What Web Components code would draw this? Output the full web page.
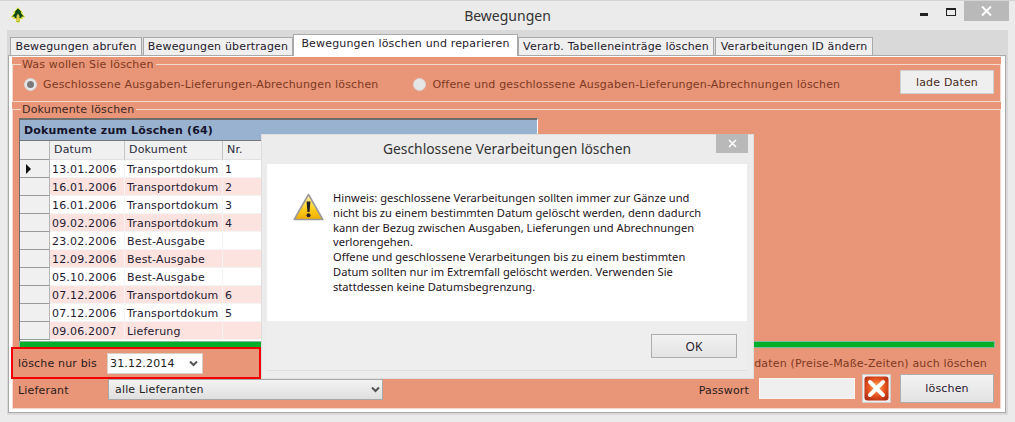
<!DOCTYPE html>
<html lang="de">
<head>
<meta charset="utf-8">
<title>Bewegungen</title>
<style>
html, body { margin: 0; padding: 0; background: #ebebeb; }
body { font: 11px "DejaVu Sans", sans-serif; letter-spacing: .17px; color: #221c2c; overflow: hidden; }
</style>
</head>
<body>
<app-window heading="Bewegungen">
    <tab-strip>
        <tab-item style="width:132px">Bewegungen abrufen</tab-item>
        <tab-item style="width:150px">Bewegungen übertragen</tab-item>
        <tab-item active style="width:225px">Bewegungen löschen und reparieren</tab-item>
        <tab-item style="width:196px">Verarb. Tabelleneinträge löschen</tab-item>
        <tab-item style="width:158px">Verarbeitungen ID ändern</tab-item>
    </tab-strip>
    <tab-panel>
        <group-box legend="Was wollen Sie löschen" tone="#7d3a22" style="height:38px">
            <options-row>
                <radio-option checked>Geschlossene Ausgaben-Lieferungen-Abrechungen löschen</radio-option>
                <radio-option>Offene und geschlossene Ausgaben-Lieferungen-Abrechnungen löschen</radio-option>
                <win-button slot="end" style="width:94px;height:24px" pale>lade Daten</win-button>
            </options-row>
        </group-box>
        <group-box legend="Dokumente löschen" tone="#3b2a26" style="height:300px;margin-top:7px">
            <doc-grid></doc-grid>
            <div style="width:976px;height:7px;margin-left:1px;background:#05ae28;box-shadow:inset 0 0 0 1px #7fb89a"></div>
            <form-row style="margin-top:5px;height:21px">
                <span style="width:89px">lösche nur bis</span>
                <select-box value="31.12.2014" plain style="width:96px;height:21px"></select-box>
                <span style="margin-left:auto;margin-right:13px;color:#7d3a22">daten (Preise-Maße-Zeiten) auch löschen</span>
            </form-row>
            <form-row style="height:29px">
                <span style="width:90px;padding-top:3px">Lieferant</span>
                <select-box value="alle Lieferanten" style="width:275px;height:21px;margin-top:1px"></select-box>
                <span style="margin-left:auto;margin-right:10px;padding-top:3px">Passwort</span>
                <input-box></input-box>
                <win-button style="width:29px;height:29px;margin-left:7px" pale><cancel-icon></cancel-icon></win-button>
                <win-button style="width:94px;height:29px;margin-left:9px;margin-right:6px">löschen</win-button>
            </form-row>
        </group-box>
    </tab-panel>
    <message-dialog slot="over" heading="Geschlossene Verarbeitungen löschen">
        Hinweis: geschlossene Verarbeitungen sollten immer zur Gänze und<br>
        nicht bis zu einem bestimmten Datum gelöscht werden, denn dadurch<br>
        kann der Bezug zwischen Ausgaben, Lieferungen und Abrechnungen<br>
        verlorengehen.<br>
        Offene und geschlossene Verarbeitungen bis zu einem bestimmten<br>
        Datum sollten nur im Extremfall gelöscht werden. Verwenden Sie<br>
        stattdessen keine Datumsbegrenzung.
    </message-dialog>
    <red-mark slot="over"></red-mark>
</app-window>

<script>
class AppWindow extends HTMLElement {
    constructor() {
        super();
        this.attachShadow({ mode: 'open' });
    }
    connectedCallback() {
        this.shadowRoot.innerHTML = `
            <style>
                :host { display: block; position: relative; width: 1015px; height: 422px; box-sizing: border-box; background: #ebebeb; border-top: 1px solid #d4d4d4; overflow: hidden; }
                .bar { height: 29px; display: grid; grid-template-columns: 1fr auto 1fr; align-items: start; }
                .logo { margin: 6px 0 0 10px; }
                h1 { margin: 4px 0 0; font: 14px/22px "Noto Sans", sans-serif; letter-spacing: 0; color: #333; }
                .controls { justify-self: end; display: flex; margin-right: 6px; align-items: flex-start; }
                .min { width: 8px; height: 3px; background: #222; margin: 12px 18px 0 0; }
                .max { width: 8px; height: 5px; border: 1px solid #222; border-top-width: 2px; margin: 7px 8px 0 0; }
                .close { width: 45px; height: 20px; background: #b9b9b9; display: flex; align-items: center; justify-content: center; }
                .body { margin: 0 7px; height: 385px; box-sizing: border-box; background: #d9d9d9; padding-top: 5px; }
            </style>
            <div class="bar">
                <svg class="logo" width="16" height="16" viewBox="0 0 16 16">
                    <path d="M8 .8 12.300 5.500H11l3.500 4.500h-3l1 1.500H9.700L9.500 15h-3L6.300 11.500H3.500l1-1.500h-3L5 5.500H3.700z" fill="#0c4a17" stroke="#e7e32a" stroke-width=".9"/>
                    <path d="M6.500 9 8 6.500 9.500 9v5.500h-3z" fill="#dccb55"/>
                </svg>
                <h1>${this.getAttribute('heading')}</h1>
                <div class="controls">
                    <div class="min"></div>
                    <div class="max"></div>
                    <div class="close">
                        <svg width="11" height="10" viewBox="0 0 11 10"><path d="M1 .5 10 9.500M10 .5 1 9.500" stroke="#fff" stroke-width="2"/></svg>
                    </div>
                </div>
            </div>
            <div class="body"><slot></slot></div>
            <slot name="over"></slot>
        `;
    }
}

class TabStrip extends HTMLElement {
    constructor() {
        super();
        this.attachShadow({ mode: 'open' }).innerHTML = `
            <style>
                :host { display: flex; align-items: flex-end; height: 20px; padding-left: 3px; position: relative; z-index: 1; }
            </style>
            <slot></slot>
        `;
    }
}

class TabItem extends HTMLElement {
    constructor() {
        super();
        this.attachShadow({ mode: 'open' }).innerHTML = `
            <style>
                :host { display: block; flex: none; box-sizing: border-box; height: 18px; margin-right: 1px; text-align: center; line-height: 17px; background: #efefef; border: 1px solid #a9a9a9; border-bottom: 0; white-space: nowrap; color: #1f1a2c; }
                :host([active]) { height: 22px; margin: 0 0 -1px -1px; line-height: 18px; background: #fff; }
            </style>
            <slot></slot>
        `;
    }
}

class TabPanel extends HTMLElement {
    constructor() {
        super();
        this.attachShadow({ mode: 'open' }).innerHTML = `
            <style>
                :host { display: block; box-sizing: border-box; width: 998px; height: 358px; margin-left: 1px; border: 1px solid #a9a9a9; background: #fff; padding: 1px 4px 3px 3px; }
                .fill { background: #e99578; height: 352px; padding-top: 7px; box-sizing: border-box; }
            </style>
            <div class="fill"><slot></slot></div>
        `;
    }
}

class GroupBox extends HTMLElement {
    constructor() {
        super();
        this.attachShadow({ mode: 'open' });
    }
    connectedCallback() {
        const tone = this.getAttribute('tone');
        this.shadowRoot.innerHTML = `
            <style>
                :host { display: flex; flex-direction: column; position: relative; box-sizing: border-box; width: 989px; border: 1px solid #f2d9cf; padding: 0 0 0 5px; }
                .legend { position: absolute; left: 8px; top: -7px; padding: 0 2px 0 1px; line-height: 13px; background: #e99578; color: ${tone}; }
            </style>
            <span class="legend">${this.getAttribute('legend')}</span>
            <slot></slot>
        `;
    }
}

class OptionsRow extends HTMLElement {
    constructor() {
        super();
        this.attachShadow({ mode: 'open' }).innerHTML = `
            <style>
                :host { display: flex; align-items: center; height: 36px; padding-left: 6px; }
                .opts { display: flex; gap: 35px; flex: 1; align-items: center; padding-top: 3px; }
                .end { margin-right: 6px; margin-top: -2px; display: block; }
            </style>
            <div class="opts"><slot></slot></div>
            <slot class="end" name="end"></slot>
        `;
    }
}

class RadioOption extends HTMLElement {
    constructor() {
        super();
        this.attachShadow({ mode: 'open' }).innerHTML = `
            <style>
                :host { display: flex; align-items: center; gap: 6px; color: #7d3a22; white-space: nowrap; }
                .dot { width: 13px; height: 13px; box-sizing: border-box; border-radius: 50%; background: #e6e6e6; border: 1px solid #d8d8d8; display: flex; align-items: center; justify-content: center; }
                :host([checked]) .dot::after { content: ""; width: 7px; height: 7px; border-radius: 50%; background: #7b7b7b; }
            </style>
            <span class="dot"></span><slot></slot>
        `;
    }
}

class WinButton extends HTMLElement {
    constructor() {
        super();
        this.attachShadow({ mode: 'open' }).innerHTML = `
            <style>
                :host { display: flex; align-items: center; justify-content: center; box-sizing: border-box; background: linear-gradient(#f2f2f2, #e3e3e3); border: 1px solid #adadad; color: #26182c; flex: none; }
                :host([pale]) { background: #efefef; border-color: #cfcfcf; color: #4a2a20; }
            </style>
            <slot></slot>
        `;
    }
}

class CancelIcon extends HTMLElement {
    constructor() {
        super();
        this.attachShadow({ mode: 'open' }).innerHTML = `
            <style>:host { display: block; width: 25px; height: 25px; }</style>
            <svg width="25" height="25" viewBox="0 0 25 25">
                <defs>
                    <radialGradient id="g" cx="50%" cy="45%" r="62%">
                        <stop offset="0" stop-color="#ffb25a"/>
                        <stop offset=".55" stop-color="#e8551f"/>
                        <stop offset="1" stop-color="#b32c12"/>
                    </radialGradient>
                </defs>
                <rect x=".5" y=".5" width="24" height="24" rx="3" fill="url(#g)"/>
                <path d="M6 6 19 19M19 6 6 19" stroke="#fff" stroke-width="4" stroke-linecap="round"/>
            </svg>
        `;
    }
}

class FormRow extends HTMLElement {
    constructor() {
        super();
        this.attachShadow({ mode: 'open' }).innerHTML = `
            <style>
                :host { display: flex; align-items: center; color: #2a1c1c; white-space: nowrap; }
            </style>
            <slot></slot>
        `;
    }
}

class SelectBox extends HTMLElement {
    constructor() {
        super();
        this.attachShadow({ mode: 'open' });
    }
    connectedCallback() {
        this.shadowRoot.innerHTML = `
            <style>
                :host { display: flex; align-items: center; justify-content: space-between; box-sizing: border-box; flex: none; padding: 0 2px 0 6px; background: linear-gradient(#f3f3f3, #dfdfdf); border: 1px solid #a8a8a8; color: #222; }
                :host([plain]) { background: #fff; border-color: #d9d0cc; padding: 0 4px 0 2px; }
            </style>
            <span>${this.getAttribute('value')}</span>
            <svg width="9" height="7" viewBox="0 0 9 7"><path d="M1 1.500 4.500 5 8 1.500" fill="none" stroke="#555" stroke-width="2"/></svg>
        `;
    }
}

class InputBox extends HTMLElement {
    constructor() {
        super();
        this.attachShadow({ mode: 'open' }).innerHTML = `
            <style>
                :host { display: block; box-sizing: border-box; width: 96px; height: 21px; background: #efefef; border: 1px solid #fbf4f0; flex: none; }
            </style>
        `;
    }
}

class DocGrid extends HTMLElement {
    constructor() {
        super();
        this.attachShadow({ mode: 'open' });
    }
    connectedCallback() {
        const rows = [
            ['13.01.2006', 'Transportdokum', '1'],
            ['16.01.2006', 'Transportdokum', '2'],
            ['16.01.2006', 'Transportdokum', '3'],
            ['09.02.2006', 'Transportdokum', '4'],
            ['23.02.2006', 'Best-Ausgabe', ''],
            ['12.09.2006', 'Best-Ausgabe', ''],
            ['05.10.2006', 'Best-Ausgabe', ''],
            ['07.12.2006', 'Transportdokum', '6'],
            ['07.12.2006', 'Transportdokum', '5'],
            ['09.06.2007', 'Lieferung', '']
        ];
        const body = rows.map((r, i) => `
            <div class="row ${i % 2 ? 'odd' : ''}">
                <div class="head">${i === 0 ? '<svg width="7" height="10" viewBox="0 0 7 10"><path d="M1 0 6 5 1 10z" fill="#111"/></svg>' : ''}</div>
                <div class="cell">${r[0]}</div>
                <div class="cell">${r[1]}</div>
                <div class="cell">${r[2]}</div>
            </div>`).join('');
        this.shadowRoot.innerHTML = `
            <style>
                :host { display: block; box-sizing: border-box; width: 519px; height: 223px; margin: 8px 0 0 1px; border-top: 2px solid #6d6d6d; border-left: 1px solid #6d6d6d; border-right: 1px solid #fff; background: #fff; color: #241a30; }
                .title { height: 20px; padding-left: 4px; line-height: 21px; background: #98b2cf; font-weight: bold; color: #14142c; }
                .row { display: grid; grid-template-columns: 30px 75px 98px 1fr; height: 18px; background: #fff; }
                .row.odd { background: #fde3e0; }
                .head { background: #f0f0f0; border-bottom: 1px solid #9a9a9a; border-right: 1px solid #b5b5b5; box-sizing: border-box; display: flex; align-items: center; padding-left: 5px; }
                .cell { box-sizing: border-box; padding-left: 2px; line-height: 19px; border-right: 1px solid #f4f4f4; border-bottom: 1px solid #f4f4f4; overflow: hidden; white-space: nowrap; }
                .row.top { height: 20px; background: #f0f0f0; border-top: 1px solid #777; box-sizing: border-box; }
                .row.top .cell { padding-left: 4px; line-height: 18px; border-right: 1px solid #c4c4c4; border-bottom: 1px solid #e2e2e2; color: #2a2a3a; }
            </style>
            <div class="title">Dokumente zum Löschen (64)</div>
            <div class="row top">
                <div class="head"></div>
                <div class="cell">Datum</div>
                <div class="cell">Dokument</div>
                <div class="cell">Nr.</div>
            </div>
            ${body}
        `;
    }
}

class MessageDialog extends HTMLElement {
    constructor() {
        super();
        this.attachShadow({ mode: 'open' });
    }
    connectedCallback() {
        this.shadowRoot.innerHTML = `
            <style>
                :host { display: flex; flex-direction: column; position: absolute; left: 261px; top: 133px; width: 493px; height: 245px; box-sizing: border-box; padding: 0 6px 7px 5px; background: #ececec; border: 1px solid #dedede; z-index: 2; font-family: "Noto Sans", sans-serif; letter-spacing: 0; }
                .head { height: 29px; position: relative; text-align: center; font-size: 13.850px; line-height: 28px; color: #333; }
                .close { position: absolute; right: -1px; top: -1px; width: 32px; height: 19px; background: #b9b9b9; display: flex; align-items: center; justify-content: center; }
                .main { height: 157px; box-sizing: border-box; background: #fff; padding: 27px 0 0 26px; display: flex; gap: 9px; }
                .text { font-size: 11.150px; line-height: 14.800px; color: #1e1420; white-space: nowrap; }
                .icon { margin-top: 2px; flex: none; }
                .foot { flex: 1; background: #eeeeee; display: flex; justify-content: flex-end; align-items: flex-start; padding: 13px 10px 0 0; border-bottom: 1px solid #e0e0e0; }
                win-button { width: 86px; height: 24px; font-size: 12px; }
            </style>
            <div class="head">
                ${this.getAttribute('heading')}
                <div class="close"><svg width="9" height="9" viewBox="0 0 9 9"><path d="M1 1 8 8M8 1 1 8" stroke="#fff" stroke-width="1.500"/></svg></div>
            </div>
            <div class="main">
                <svg class="icon" width="31" height="28" viewBox="0 0 31 28">
                    <defs>
                        <linearGradient id="w" x1="0" y1="0" x2="0" y2="1">
                            <stop offset="0" stop-color="#fff6b0"/>
                            <stop offset=".55" stop-color="#fcd31f"/>
                            <stop offset="1" stop-color="#f0a800"/>
                        </linearGradient>
                    </defs>
                    <path d="M15.500 1.500 29.800 26.500H1.200z" fill="url(#w)" stroke="#9a9a9a" stroke-width="1.600" stroke-linejoin="round"/>
                    <path d="M13.600 8.500h3.800L16.600 19h-2.200z" fill="#222"/>
                    <circle cx="15.500" cy="22.300" r="2" fill="#222"/>
                </svg>
                <div class="text"><slot></slot></div>
            </div>
            <div class="foot"><win-button>OK</win-button></div>
        `;
    }
}

class RedMark extends HTMLElement {
    constructor() {
        super();
        this.attachShadow({ mode: 'open' }).innerHTML = `
            <style>
                :host { display: block; position: absolute; left: 11px; top: 346px; width: 250px; height: 32px; box-sizing: border-box; border: 2px solid #f00000; z-index: 3; pointer-events: none; }
            </style>
        `;
    }
}

customElements.define('app-window', AppWindow);
customElements.define('tab-strip', TabStrip);
customElements.define('tab-item', TabItem);
customElements.define('tab-panel', TabPanel);
customElements.define('group-box', GroupBox);
customElements.define('options-row', OptionsRow);
customElements.define('radio-option', RadioOption);
customElements.define('win-button', WinButton);
customElements.define('cancel-icon', CancelIcon);
customElements.define('form-row', FormRow);
customElements.define('select-box', SelectBox);
customElements.define('input-box', InputBox);
customElements.define('doc-grid', DocGrid);
customElements.define('message-dialog', MessageDialog);
customElements.define('red-mark', RedMark);
</script>
</body>
</html>
